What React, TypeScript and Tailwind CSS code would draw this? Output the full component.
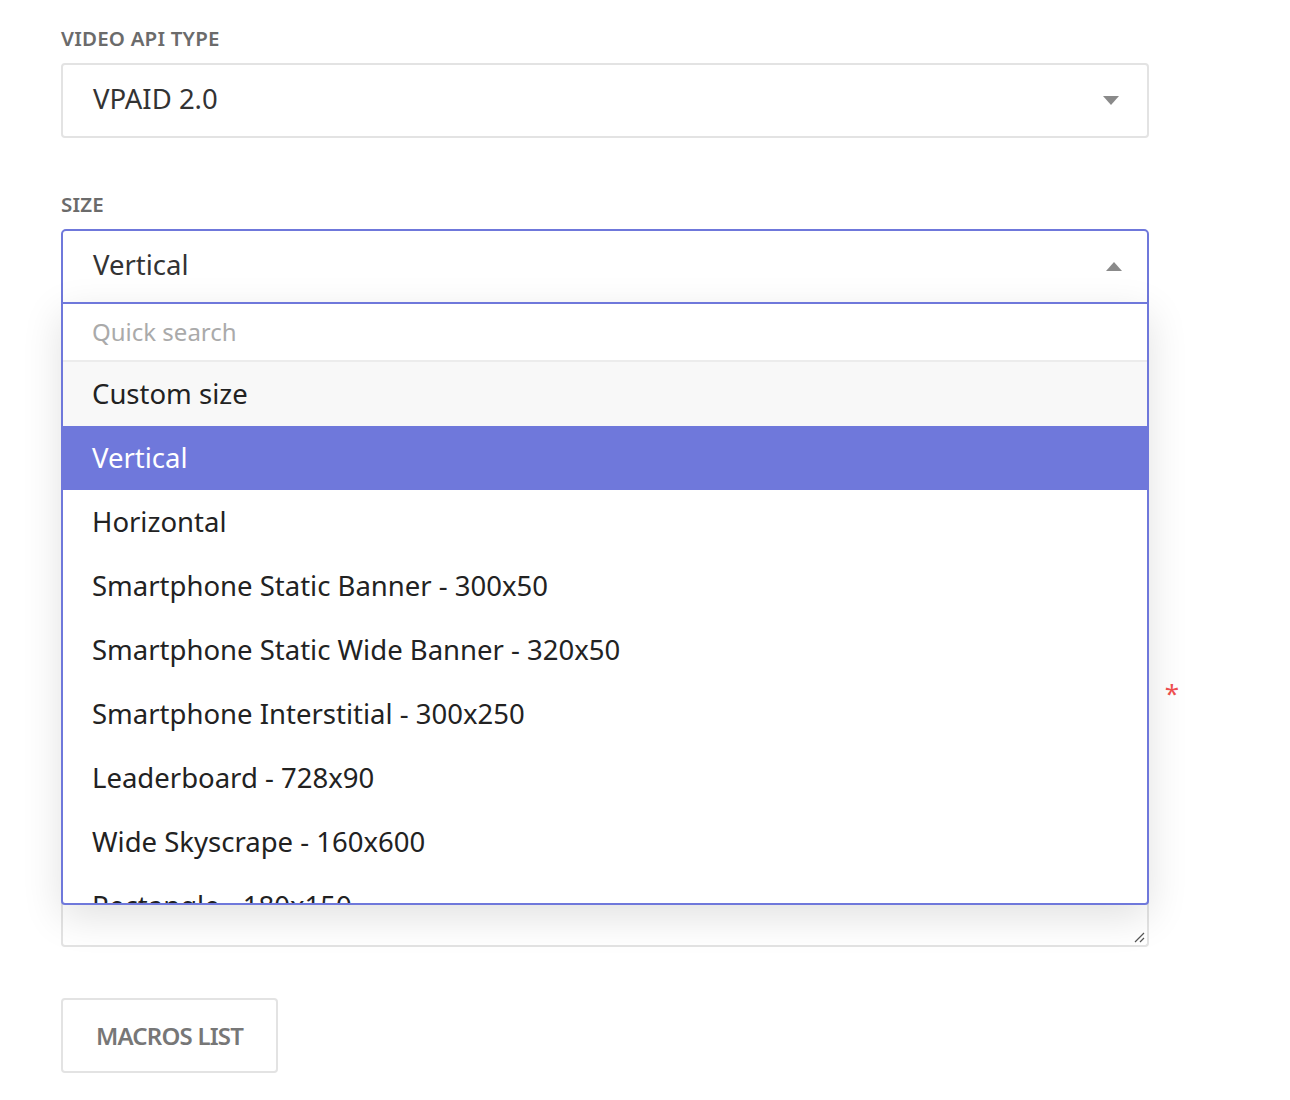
const options = [
  'Custom size',
  'Vertical',
  'Horizontal',
  'Smartphone Static Banner - 300x50',
  'Smartphone Static Wide Banner - 320x50',
  'Smartphone Interstitial - 300x250',
  'Leaderboard - 728x90',
  'Wide Skyscrape - 160x600',
  'Rectangle - 180x150',
];

function Caret({ up }: { up?: boolean }) {
  return (
    <svg width="16" height="9" viewBox="0 0 16 9" className="text-[#8a8a8a]">
      <path d={up ? 'M0 9 L8 0 L16 9 Z' : 'M0 0 L8 9 L16 0 Z'} fill="currentColor" />
    </svg>
  );
}

export default function App() {
  return (
    <div className="min-h-[1100px] bg-white font-['Open_Sans',sans-serif] text-[#333]">
      <div className="w-[1088px] ml-[61px] pt-[24px]">
        <p className="text-[20.5px] font-semibold text-[#6b6b6b] uppercase leading-[28px] tracking-[0.2px]">Video API type</p>
        <div className="mt-[11px] h-[75px] rounded-[4px] border-2 border-[#e3e3e3] flex items-center justify-between pl-[30px] pr-[28px]">
          <span className="text-[27.5px] -mt-[3px]">VPAID 2.0</span>
          <Caret />
        </div>

        <p className="mt-[52px] text-[20.5px] font-semibold text-[#6b6b6b] uppercase leading-[28px] tracking-[0.2px]">Size</p>
        <div className="relative mt-[11px]">
          <div className="h-[75px] rounded-t-[5px] border-2 border-[#6f78db] flex items-center justify-between pl-[30px] pr-[25px]">
            <span className="text-[27.5px] -mt-[3px]">Vertical</span>
            <Caret up />
          </div>

          {/* underlying form, covered by the menu */}
          <div className="h-[570px] relative">
            <span className="absolute right-[-30px] top-[370px] text-[26px] text-[#f05050]">*</span>
          </div>
          <div className="relative h-[73px] rounded-b-[4px] border-2 border-t-0 border-[#e3e3e3]">
            <svg width="12" height="12" viewBox="0 0 12 12" className="absolute right-[2px] bottom-[2px] text-[#555]">
              <path d="M11 2 L2 11 M11 7 L7 11" stroke="currentColor" strokeWidth="1.2" />
            </svg>
          </div>

          <div className="absolute left-0 right-0 top-[73px] h-[603px] overflow-hidden rounded-b-[4px] border-2 border-[#6f78db] bg-white shadow-[0_12px_40px_rgba(0,0,0,0.12)]">
            <div className="h-[58px] border-b-2 border-[#ececec] flex items-center pl-[29px] text-[24px] text-[#aaa]">
              Quick search
            </div>
            {options.map((o, i) => (
              <div
                key={o}
                className={
                  'h-[64px] flex items-center pl-[29px] text-[27.5px] ' +
                  (i === 1 ? 'bg-[#6f78db] text-white' : i === 0 ? 'bg-[#f8f8f8] text-[#222]' : 'text-[#222]')
                }
              >
                {o}
              </div>
            ))}
          </div>
        </div>

        <button className="mt-[51px] h-[75px] w-[217px] rounded-[4px] border-2 border-[#e3e3e3] text-[24px] font-semibold text-[#777] tracking-[-0.8px]">
          MACROS LIST
        </button>
      </div>
    </div>
  );
}
